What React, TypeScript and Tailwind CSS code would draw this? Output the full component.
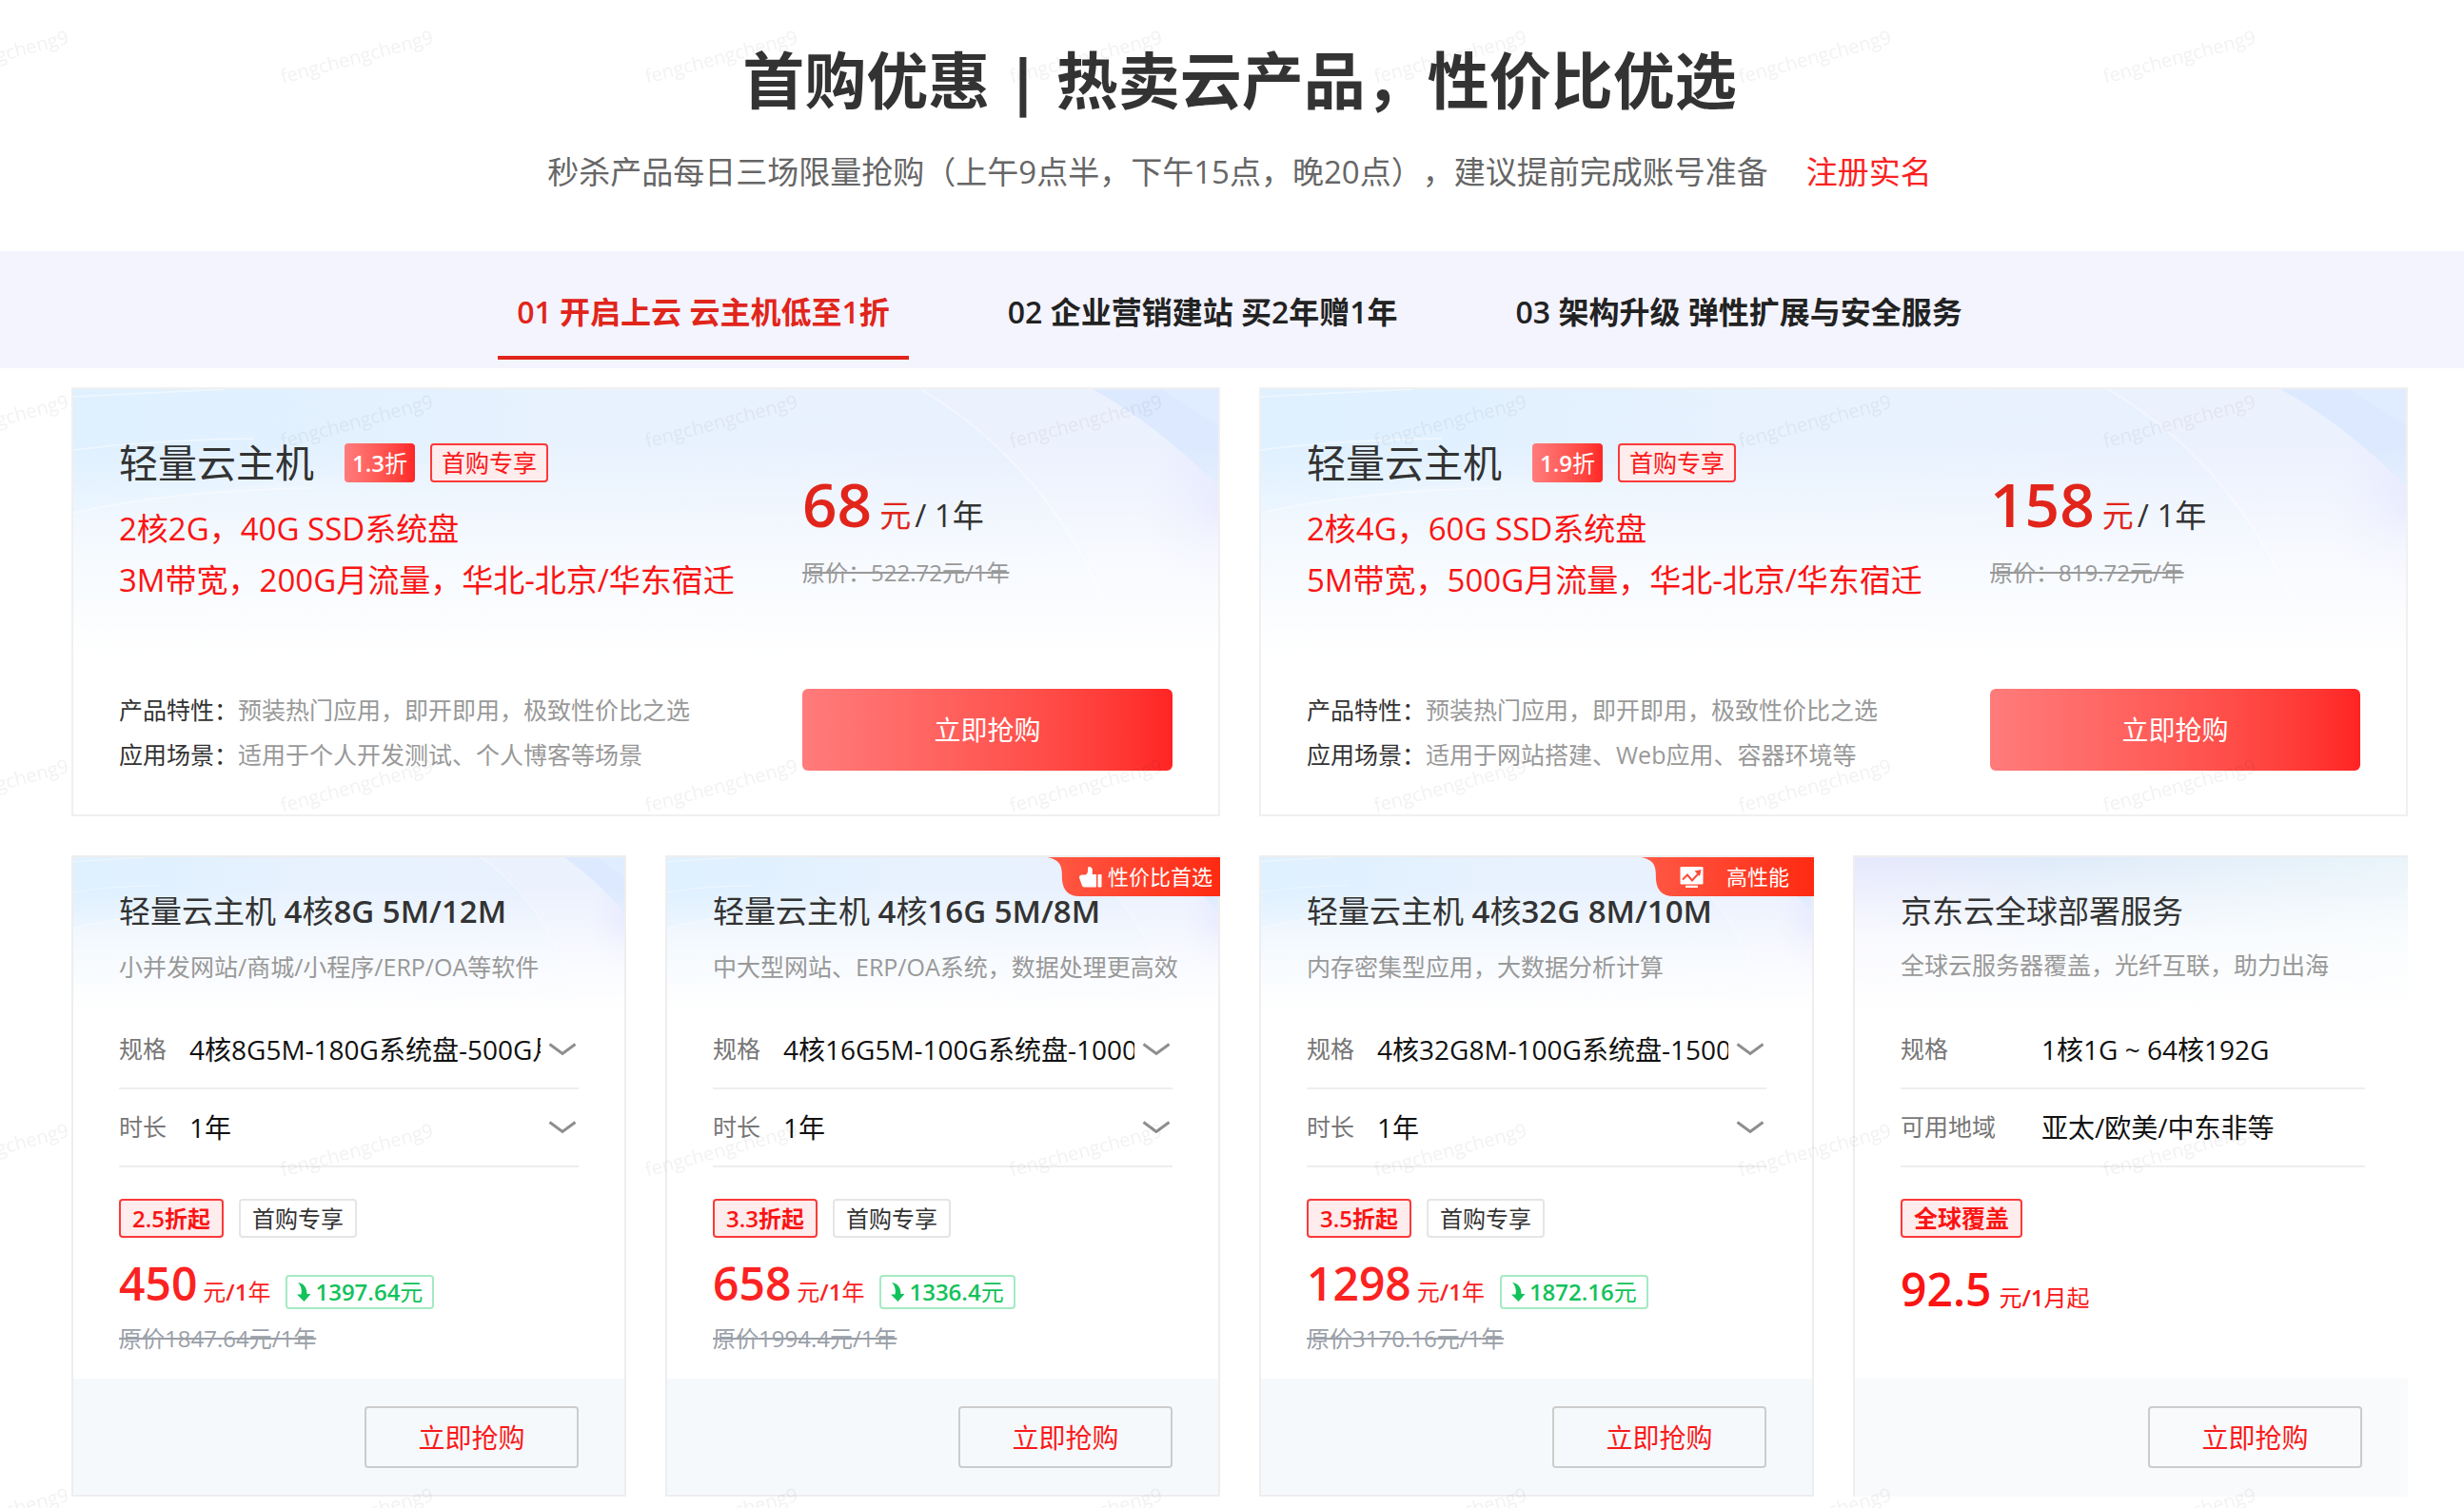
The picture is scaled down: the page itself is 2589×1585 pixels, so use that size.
import { Fragment, type ReactNode } from "react";
import clsx from "clsx";

const tabs = [
  { no: "01", label: "开启上云 云主机低至1折" },
  { no: "02", label: "企业营销建站 买2年赠1年" },
  { no: "03", label: "架构升级 弹性扩展与安全服务" },
];

const featured = [
  {
    name: "轻量云主机",
    discount: "1.3折",
    specs: ["2核2G，40G SSD系统盘", "3M带宽，200G月流量，华北-北京/华东宿迁"],
    price: "68",
    origin: "原价：522.72元/1年",
    feature: "预装热门应用，即开即用，极致性价比之选",
    scene: "适用于个人开发测试、个人博客等场景",
  },
  {
    name: "轻量云主机",
    discount: "1.9折",
    specs: ["2核4G，60G SSD系统盘", "5M带宽，500G月流量，华北-北京/华东宿迁"],
    price: "158",
    origin: "原价：819.72元/年",
    feature: "预装热门应用，即开即用，极致性价比之选",
    scene: "适用于网站搭建、Web应用、容器环境等",
  },
];

const plans = [
  {
    id: "c8",
    title: "轻量云主机 4核8G 5M/12M",
    desc: "小并发网站/商城/小程序/ERP/OA等软件",
    spec: "4核8G5M-180G系统盘-500G月流量",
    discount: "2.5折起",
    price: "450",
    saved: "1397.64元",
    origin: "原价1847.64元/1年",
    ribbon: null,
  },
  {
    id: "c16",
    title: "轻量云主机 4核16G 5M/8M",
    desc: "中大型网站、ERP/OA系统，数据处理更高效",
    spec: "4核16G5M-100G系统盘-1000G月流量",
    discount: "3.3折起",
    price: "658",
    saved: "1336.4元",
    origin: "原价1994.4元/1年",
    ribbon: (
      <Ribbon className="gap-1.5 pr-2" text="性价比首选">
        <ThumbIcon />
      </Ribbon>
    ),
  },
  {
    id: "c32",
    title: "轻量云主机 4核32G 8M/10M",
    desc: "内存密集型应用，大数据分析计算",
    spec: "4核32G8M-100G系统盘-1500G月流量",
    discount: "3.5折起",
    price: "1298",
    saved: "1872.16元",
    origin: "原价3170.16元/1年",
    ribbon: (
      <Ribbon className="gap-6 pr-[26px]" text="高性能">
        <ChartIcon />
      </Ribbon>
    ),
  },
];

// Latin letters and digits get a heavier weight than the Chinese around them.
function Mixed({ text }: { text: string }) {
  return (
    <>
      {text.split(/([\x20-\x7e]+)/).map((part, i) =>
        i % 2 ? (
          <span key={i} className="font-semibold">
            {part}
          </span>
        ) : (
          <Fragment key={i}>{part}</Fragment>
        ),
      )}
    </>
  );
}

function ThumbIcon() {
  return (
    <svg width="24" height="22" viewBox="0 0 24 22" fill="#fff" aria-hidden>
      <path d="M10.5 0C12.500 0 13.800 1.500 13.800 3.500V8H18V21.500H5.500C4 21.500 3.200 20.800 2.800 19.500L.2 12C-.3 9.800.8 8.500 3 8.500H6.500C8.300 7.500 9 6 9 4V1.500C9 .5 9.600 0 10.500 0z" />
      <rect x="19.500" y="8" width="4" height="13.500" rx="0.800" />
    </svg>
  );
}

function ChartIcon() {
  return (
    <svg width="25" height="22" viewBox="0 0 25 22" fill="none" aria-hidden>
      <rect x="0.500" y="0" width="24" height="18.500" rx="1.200" fill="#fff" />
      <rect x="6" y="19.800" width="13" height="2.200" rx="0.500" fill="#fff" />
      <path d="M3 13.500l5-5 5 6 8-9" stroke="#ff4a38" strokeWidth="2" />
      <path d="M15.500 4.500l7-1.500-1.500 7z" fill="#ff4a38" />
    </svg>
  );
}

function Chevron() {
  return (
    <svg width="30" height="15" viewBox="0 0 30 15" fill="none" className="shrink-0" aria-hidden>
      <path d="M1.500 1.500l13.500 10L28.500 1.500" stroke="#8e8e8e" strokeWidth="3" />
    </svg>
  );
}

function DropArrow() {
  return (
    <svg width="15" height="20" viewBox="0 0 15 20" fill="#12c25b" className="self-center" aria-hidden>
      <path d="M1 0C7 .8 10.500 5 10.500 12H14.500L7.500 20L0 12.500H4.500C5.500 8 4.500 3.500 1 0z" />
    </svg>
  );
}

function Ribbon({ className, text, children }: { className: string; text: string; children: ReactNode }) {
  return (
    <div
      className={clsx(
        "absolute top-0 -right-0.5 z-10 flex h-[41px] w-[182px] items-center justify-end text-[22px] text-white",
        className,
      )}
    >
      <svg className="absolute inset-0 -z-10 size-full" viewBox="0 0 182 41" preserveAspectRatio="none" aria-hidden>
        <defs>
          <linearGradient id="ribbon" x1="0" x2="1">
            <stop offset="0" stopColor="#ff5a46" />
            <stop offset="1" stopColor="#ff2a12" />
          </linearGradient>
        </defs>
        <path d="M0 0H182V41H34C22 41 17 34 16 24C16 11 16 3 0 0z" fill="url(#ribbon)" />
      </svg>
      {children}
      <span>{text}</span>
    </div>
  );
}

// Pale blue sweep behind the top of every product card.
function Sweep({ id }: { id: string }) {
  return (
    <svg className="absolute inset-0 -z-10 size-full" viewBox="0 0 1206 283" preserveAspectRatio="none" aria-hidden>
      <defs>
        <linearGradient id={`${id}-base`} x1="0" x2="1">
          <stop offset="0" stopColor="#e6f2fe" />
          <stop offset="0.500" stopColor="#e8f2fe" />
          <stop offset="1" stopColor="#e9f0fe" />
        </linearGradient>
        <linearGradient id={`${id}-left`} x1="0" x2="1">
          <stop offset="0" stopColor="#dff0ff" />
          <stop offset="1" stopColor="#dff0ff" stopOpacity="0" />
        </linearGradient>
        <linearGradient id={`${id}-fade`} x1="0" x2="0" y1="0" y2="1">
          <stop offset="0.200" stopColor="#fff" stopOpacity="0" />
          <stop offset="0.600" stopColor="#fff" stopOpacity="0.600" />
          <stop offset="1" stopColor="#fff" />
        </linearGradient>
        <radialGradient id={`${id}-violet`}>
          <stop offset="0" stopColor="#dfe2ff" />
          <stop offset="1" stopColor="#e6e8ff" stopOpacity="0" />
        </radialGradient>
      </defs>
      <rect width="1206" height="283" fill={`url(#${id}-base)`} />
      <path d="M892 0C1010 70 1080 180 1104 283H1206V0z" fill="#ecf1fe" />
      <ellipse cx="1206" cy="130" rx="80" ry="100" fill={`url(#${id}-violet)`} />
      <path d="M0 0H560C460 100 240 80 0 130z" fill={`url(#${id}-left)`} />
      <path d="M1074 0C1120 26 1165 60 1206 102V0z" fill="#dce9fe" />
      <path d="M1145 0L1206 38V0z" fill="#e0ecff" />
      <g fill="none" stroke="#fff" strokeOpacity="0.400" strokeWidth="2">
        <path d="M0 130C80 112 160 106 250 104" />
        <path d="M0 64C60 56 120 53 190 52" />
        <path d="M0 8C60 5 110 3 160 0" />
        <path d="M892 0C1010 70 1080 180 1104 283" />
      </g>
      <rect width="1206" height="283" fill={`url(#${id}-fade)`} />
    </svg>
  );
}

function Watermark() {
  return (
    <svg className="pointer-events-none absolute inset-0 z-20 size-full" aria-hidden>
      <defs>
        <pattern id="wm" x="-89" y="0" width="383" height="383" patternUnits="userSpaceOnUse">
          <text x="0" y="0" transform="translate(3 88) rotate(-15)" fontSize="20" fill="#000" fillOpacity="0.050">
            fengchengcheng9
          </text>
        </pattern>
      </defs>
      <rect width="100%" height="100%" fill="url(#wm)" />
    </svg>
  );
}

function SelectRow({ id, label, value }: { id: string; label: string; value: string }) {
  return (
    <div className="flex h-[82px] items-center border-b-2 border-[#eee]">
      <label htmlFor={id} className="w-[74px] shrink-0 text-[25px] text-[#777]">
        {label}
      </label>
      <select
        id={id}
        className="min-w-0 flex-1 appearance-none overflow-hidden bg-transparent text-[28px] text-clip whitespace-nowrap text-[#111]"
      >
        <option>{value}</option>
      </select>
      <span className="pr-0.5 pl-2">
        <Chevron />
      </span>
    </div>
  );
}

function BuyButton() {
  return (
    <button className="h-[65px] w-[225px] rounded border-2 border-[#ccc] text-[28px] text-[#fb1919]">立即抢购</button>
  );
}

function FeaturedCard({ item, id }: { item: (typeof featured)[number]; id: string }) {
  return (
    <article className="relative isolate flex justify-between border-2 border-[#f0f0f0] bg-white px-12 pb-[39px]">
      <div className="absolute inset-x-0 top-0 -z-10 h-[283px]">
        <Sweep id={id} />
      </div>
      <div className="pt-[57px]">
        <div className="flex h-[41px] items-center">
          <h2 className="text-[41px] text-[#333]">{item.name}</h2>
          <span className="ml-8 h-[41px] rounded bg-linear-to-r from-[#ff7b7b] to-[#ff2424] px-2 text-[24px] leading-[41px] text-white">
            <Mixed text={item.discount} />
          </span>
          <span className="ml-4 h-[41px] rounded border-2 border-[#fb3a3a] bg-[#ffecec] px-2.5 text-[25px] leading-[37px] text-[#fb1919]">
            首购专享
          </span>
        </div>
        <div className="mt-[22px] text-[33px] leading-[54px] text-[#fb1414]">
          {item.specs.map((line) => (
            <p key={line}>{line}</p>
          ))}
        </div>
        <dl className="mt-[86px] grid grid-cols-[auto_1fr] text-[25px] leading-[47px]">
          <dt className="text-[#333]">产品特性：</dt>
          <dd className="text-[#999]">{item.feature}</dd>
          <dt className="text-[#333]">应用场景：</dt>
          <dd className="text-[#999]">{item.scene}</dd>
        </dl>
      </div>
      <div className="w-[389px] pt-[85px]">
        <p className="flex items-baseline text-[33px] leading-10 text-[#e1251b]">
          <span className="mr-2 text-[64px] leading-[72px] font-semibold">{item.price}</span>元
          <span className="ml-1 text-[#333]">/ 1年</span>
        </p>
        <p className="mt-4 text-[24px] leading-10 text-[#999] line-through">{item.origin}</p>
        <button className="mt-[102px] h-[86px] w-full rounded-md bg-linear-to-r from-[#ff7b7b] to-[#ff2424] text-[28px] text-white">
          立即抢购
        </button>
      </div>
    </article>
  );
}

function PlanCard({ plan }: { plan: (typeof plans)[number] }) {
  return (
    <article className="relative border-2 border-[#eee] bg-white">
      {plan.ribbon}
      <header className="relative isolate px-12 pt-[35px] pb-[29px] whitespace-nowrap">
        <Sweep id={plan.id} />
        <h3 className="text-[33px] leading-11 text-[#333]">
          <Mixed text={plan.title} />
        </h3>
        <p className="mt-[18px] text-[25px] leading-9 text-[#999]">{plan.desc}</p>
      </header>
      <div className="px-12 pb-6">
        <SelectRow id={`${plan.id}-spec`} label="规格" value={plan.spec} />
        <SelectRow id={`${plan.id}-term`} label="时长" value="1年" />
        <div className="mt-[33px] flex gap-4">
          <span className="h-[41px] rounded border-2 border-[#fb3a3a] bg-[#ffecec] px-3 text-[24px] leading-[37px] font-semibold text-[#fb1414]">
            {plan.discount}
          </span>
          <span className="h-[41px] rounded border-2 border-[#e5e5e5] px-3 text-[24px] leading-[37px] text-[#333]">
            首购专享
          </span>
        </div>
        <p className="mt-[18px] flex items-baseline text-[#fb2222]">
          <span className="text-[48px] leading-[60px] font-semibold">{plan.price}</span>
          <span className="ml-1.5 text-[24px]">
            <Mixed text="元/1年" />
          </span>
          <span className="ml-4 flex items-baseline gap-1 rounded border-2 border-[#a5eac2] px-2.5 text-[24px] leading-8 text-[#12c25b]">
            <DropArrow />
            <span>
              <Mixed text={plan.saved} />
            </span>
          </span>
        </p>
        <p className="mt-2.5 text-[24px] leading-9 text-[#9aa0a8] line-through">{plan.origin}</p>
      </div>
      <footer className="flex justify-end bg-[#f6f9fc] px-12 pt-[29px] pb-7">
        <BuyButton />
      </footer>
    </article>
  );
}

function InfoRow({ label, value }: { label: string; value: string }) {
  return (
    <div className="flex h-[82px] items-center border-b-2 border-[#eee]">
      <dt className="w-[148px] shrink-0 text-[25px] text-[#777]">{label}</dt>
      <dd className="text-[28px] text-[#111]">{value}</dd>
    </div>
  );
}

function GlobalCard() {
  return (
    <article className="flex flex-col border-t-2 border-l-2 border-[#eee] bg-white">
      <header className="relative isolate px-12 pt-[35px] pb-[31px] whitespace-nowrap">
        <div className="absolute inset-0 -z-10 bg-linear-to-r from-[#e6e8fc] via-[#dfebfa] via-35% to-[#e9f4fa]" />
        <div className="absolute inset-0 -z-10 bg-linear-to-b from-transparent via-white/75 to-white" />
        <h3 className="text-[33px] leading-11 text-[#333]">京东云全球部署服务</h3>
        <p className="mt-4 text-[25px] leading-9 text-[#999]">全球云服务器覆盖，光纤互联，助力出海</p>
      </header>
      <div className="px-12 pr-[45px]">
        <dl>
          <InfoRow label="规格" value="1核1G ~ 64核192G" />
          <InfoRow label="可用地域" value="亚太/欧美/中东非等" />
        </dl>
        <div className="mt-[33px] flex">
          <span className="h-[41px] rounded border-2 border-[#fb3a3a] bg-[#ffecec] px-3 text-[25px] leading-[37px] font-semibold text-[#fb1414]">
            全球覆盖
          </span>
        </div>
        <p className="mt-6 flex items-baseline text-[#fb1414]">
          <span className="text-[48px] leading-[60px] font-semibold">92.5</span>
          <span className="ml-2 text-[24px]">
            <Mixed text="元/1月起" />
          </span>
        </p>
      </div>
      <footer className="mt-auto flex justify-end bg-[#f8fafc] px-12 pt-[29px] pb-[30px]">
        <BuyButton />
      </footer>
    </article>
  );
}

export default function App() {
  return (
    <div className="relative min-h-screen overflow-hidden bg-white font-['Open_Sans','Noto_Sans_CJK_SC',sans-serif] [text-spacing-trim:space-all]">
      <header className="pt-11 pr-[59px] pb-[59px] pl-[75px] text-center">
        <h1 className="text-[65px] leading-20 font-bold text-[#333]">首购优惠 | 热卖云产品，性价比优选</h1>
        <p className="mt-[33px] text-[33px] leading-12 text-[#666]">
          秒杀产品每日三场限量抢购（上午9点半，下午15点，晚20点），建议提前完成账号准备
          <a href="#register" className="ml-10 text-[#fb2222]">
            注册实名
          </a>
        </p>
      </header>

      <nav className="flex justify-center gap-[84px] bg-[#f4f4fe] pr-[59px] pb-[9px] pl-[75px]">
        {tabs.map((tab, i) => (
          <button
            key={tab.no}
            className={clsx(
              "border-b-4 px-5 pt-10 pb-[22px] text-[32px] leading-12 font-semibold",
              i === 0 ? "border-[#e1251b] text-[#e1251b]" : "border-transparent text-[#222]",
            )}
          >
            {tab.no} {tab.label}
          </button>
        ))}
      </nav>

      <main className="flex flex-col gap-[41px] pt-5 pr-[59px] pl-[75px]">
        <section className="grid grid-cols-2 gap-[41px]">
          {featured.map((item, i) => (
            <FeaturedCard key={item.price} item={item} id={`top${i}`} />
          ))}
        </section>
        <section className="grid grid-cols-4 gap-[41px]">
          {plans.map((plan) => (
            <PlanCard key={plan.id} plan={plan} />
          ))}
          <GlobalCard />
        </section>
      </main>
      <Watermark />
    </div>
  );
}
